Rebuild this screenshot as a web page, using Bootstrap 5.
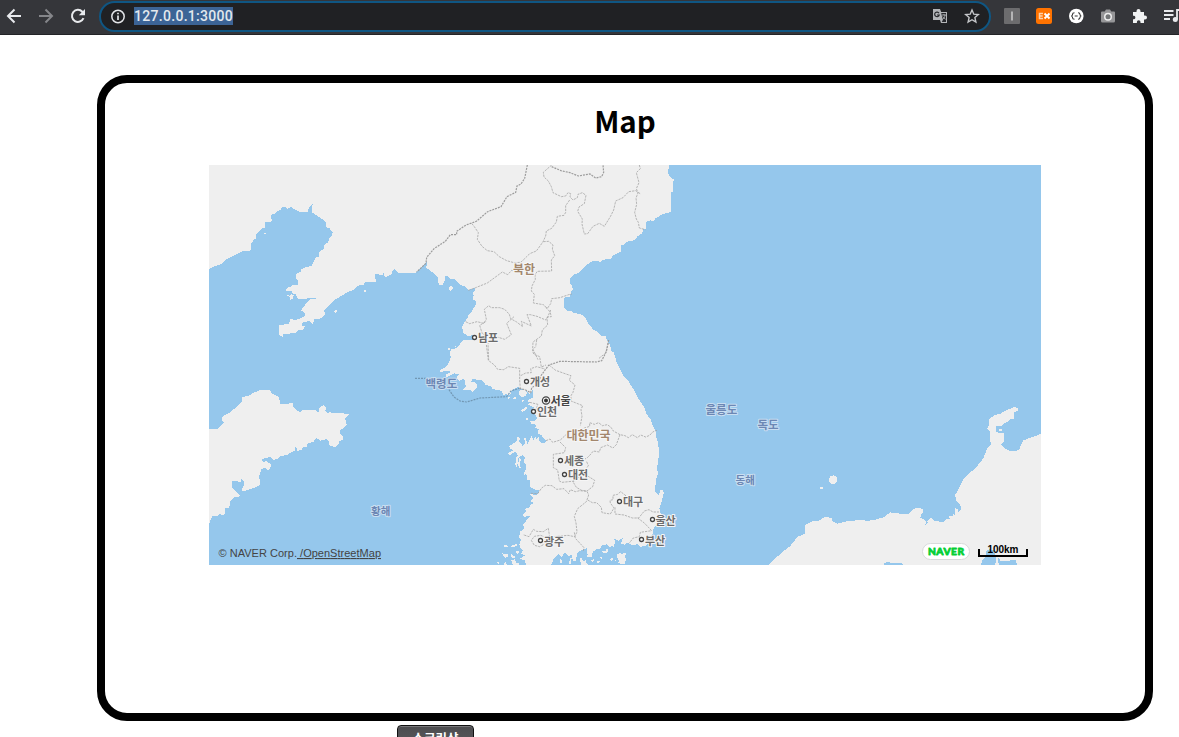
<!DOCTYPE html>
<html lang="ko">
<head>
<meta charset="utf-8">
<meta name="viewport" content="width=device-width, initial-scale=1">
<title>Map</title>
<link href="https://cdn.jsdelivr.net/npm/bootstrap@5.3.0/dist/css/bootstrap.min.css" rel="stylesheet">
<style>
body{font-family:"Liberation Sans","Noto Sans CJK KR",sans-serif;height:737px;overflow:hidden;color:#000}
.toolbar{height:35px;background:#35363a;border-bottom:1px solid #232427;padding:0 0 2px 6px}
.toolbar svg{display:block;flex:none}
.omnibox{width:892px;height:31px;margin-left:13px;border:2px solid #0f5683;border-radius:16px;background:#202124;padding:0 9px}
.address{font:500 14px/18px Roboto,sans-serif;color:#e3e8ed;background:#3c6496;letter-spacing:.3px;margin-left:9px}
.frame{width:1056px;height:646px;margin:40px 0 0 97px;border:8px solid #000;border-radius:30px}
.frame h1{font:700 29.5px/46px "Noto Sans CJK KR",sans-serif;margin:14px 0 22px}
.mapview{width:80%;height:400px;display:block;margin:0 auto}
.mapview text{font-family:"Noto Sans CJK KR",sans-serif;font-size:11px;font-weight:700;fill:#6c6c6c;paint-order:stroke;stroke:#f6f6f6;stroke-width:2px;stroke-linejoin:round}
.mapview .country{font-size:12px;fill:#a3876d}
.mapview .sea{fill:#6c87b4;stroke:#c9def1}
.mapview .latin{font-family:"Liberation Sans",sans-serif;fill:#444;stroke:none;font-weight:400}
.land{fill:#efefef;shape-rendering:crispEdges}
.water{fill:#95c7ec;shape-rendering:crispEdges}
.edge{fill:none;stroke:#a2a2a2;stroke-width:2.3;stroke-dasharray:7 3}
.edge.national{stroke:#9c9c9c;stroke-width:3.6;stroke-dasharray:6 3}
.shot{width:77px;height:28px;margin:4px 0 0 397px;background:linear-gradient(#4c4c4f,#5d5d60);border:1px solid #111;border-radius:4px;color:#fff;font:700 12.5px/21px "Noto Sans CJK KR",sans-serif;padding:0 0 4px;display:block;box-shadow:inset 0 1px #77777a}
</style>
</head>
<body class="bg-white">
<nav class="toolbar d-flex align-items-center">
  <svg width="16" height="16" fill="none" stroke="#e8eaed" stroke-width="2"><path d="M15 8H2M8.500 1.500L2 8l6.500 6.500"/></svg>
  <svg class="ms-3" width="16" height="16" fill="none" stroke="#85868a" stroke-width="2"><path d="M1 8h13M7.500 1.500L14 8l-6.500 6.500"/></svg>
  <svg class="ms-3" width="16" height="16" fill="none" stroke="#e8eaed" stroke-width="2"><path d="M13.500 10.200A6 6 0 1 1 12.300 3.700L14 5.500"/><path d="M15 1v6.200H8.800z" fill="#e8eaed" stroke="none"/></svg>
  <div class="omnibox d-flex align-items-center">
    <svg width="15" height="15" fill="none" stroke="#e3e5e8" stroke-width="1.500"><circle cx="8" cy="7.500" r="6.200"/><path d="M8 6.600v4.400M8 3.700v1.600" stroke-width="1.700"/></svg>
    <span class="address">127.0.0.1:3000</span>
    <svg class="ms-auto" width="16" height="16"><path d="M1 1h7l1.200 3H15v11H9l-1-3H1z" fill="#b2b4b7"/><path d="M9.200 5H14v9H9.800l1-2z" fill="#27282c"/><path d="M7 5.200A2.300 2.300 0 1 0 7.200 7H5" fill="none" stroke="#27282c" stroke-width="1.200"/><path d="M10 7h4M12 6v1M13 7c0 2-1.500 4-3 4.500M10.700 8.500l3 3" fill="none" stroke="#b2b4b7" stroke-width=".9"/></svg>
    <svg class="ms-3 me-0" width="16" height="16" fill="none" stroke="#c5c7ca" stroke-width="1.400"><path d="M8 2l1.800 4.200 4.500.4-3.400 3 1 4.400L8 11.700 4.100 14l1-4.400-3.400-3 4.500-.4z"/></svg>
  </div>
  <svg width="175" height="24" style="margin-left:13px">
    <rect x="0" y="4" width="16" height="16" rx="1" fill="#6c6c6e"/><path d="M8 7.500v9" stroke="#ddd" stroke-width="1.300"/>
    <rect x="32" y="4" width="16" height="16" rx="2.500" fill="#ff7300"/><path d="M39 9.500h-3.500v5H39M35.500 12h3.200" fill="none" stroke="#ffd2aa" stroke-width="1.500"/><path d="M40.500 9.500l5 5m0-5l-5 5" stroke="#fff" stroke-width="1.900"/>
    <circle cx="72.300" cy="12" r="7.300" fill="#fff"/><path d="M70.500 8.700q-2 0-2 1.800 0 1.200-1.200 1.500 1.200.3 1.200 1.500 0 1.800 2 1.800M74 8.700q2 0 2 1.800 0 1.200 1.200 1.500-1.200.3-1.200 1.500 0 1.800-2 1.800M70.700 12h3" fill="none" stroke="#333" stroke-width="1.100"/>
    <path d="M98 7.500h2.700l1.300-2h4l1.300 2h2.700q1 0 1 1V17q0 1.500-1.500 1.500h-11q-1.500 0-1.500-1.500V8.500q0-1 1-1z" fill="#969698"/><circle cx="104" cy="12.800" r="4" fill="#eee"/><circle cx="104" cy="12.800" r="2.500" fill="#747678"/>
    <path d="M129 8h3.500V7a2 2 0 0 1 4 0v1h3.500v3.500h1a2 2 0 0 1 0 4h-1V19h-3.500v-1a1.800 1.800 0 0 0-3.600 0v1H129v-3.800h1a1.800 1.800 0 0 0 0-3.500h-1z" fill="#f1f3f4"/>
    <path d="M160 7h9.500M160 11h9.500M160 15h6" stroke="#e8eaed" stroke-width="1.800"/><path d="M173 15.500V6h4" fill="none" stroke="#e8eaed" stroke-width="1.800"/><circle cx="171.300" cy="15.500" r="2.500" fill="#e8eaed"/>
  </svg>
</nav>

<main class="frame text-center">
  <h1>Map</h1>
  <svg class="mapview" viewBox="209 165 832 400">
    <rect class="water" x="209" y="165" width="832" height="400"/>
    <!-- Manchuria and Liaodong -->
    <g class="land" transform="translate(205 160) scale(.333333)">
      <path d="M12 15V327L24 321 42 315 55 308 65 297 82 289 100 280 115 273 133 273 138 268 137 248 145 247 146 237 153 236 153 222 165 213 173 205 180 203 180 187 196 186 204 180 198 177 200 163 213 160 217 153 226 150 230 142H242L248 147 258 141 266 147 283 155H309L311 145 319 137 321 132H324L321 137V157L331 164 345 173 356 181 362 188 363 202 375 205 377 211 383 218 380 229 372 237 369 247 358 254V266L346 273 341 281 341 290 333 293 326 304 320 318 300 322 289 328 288 335 275 340 272 353 280 364V374L265 374 258 380 246 383 241 393 261 394 264 401 273 404 279 418H300L309 414 333 413V417L315 418 302 430 300 437 292 444 289 452 299 458 299 468 288 474 274 480 256 477 252 491 223 496 222 523 232 531 236 522 273 519 279 511 297 508 299 498 291 499 290 492 296 487 311 483 318 487 324 492 328 478 342 476 350 474 360 463 357 450 363 446 390 419 410 407 430 395 444 391 460 377 476 374 480 366 512 366 511 343 530 344 534 347V339H537V347L543 351 556 345 560 340 562 333 568 329V325L572 331 580 338 620 340 635 337 665 305 667 325 690 343 698 352V363L705 376H713L720 358V15Z"/>
      <path d="M243 404l12 3 3-5 8 3-3 12-8 2 1-9-9-1zM177 218h7v4h-7zM477 390h6v6h-6zM388 453l7-3v6l-6 3z"/>
    </g>
    <!-- northern part of the peninsula -->
    <g class="land" transform="translate(400 160) scale(.333333)">
      <path d="M0 15V338L30 340 50 335 80 300 82 309 78 322 92 333 105 343 112 345 115 352 113 362 119 363 118 376 128 376 131 366V347L144 349 151 358 164 357 173 368 188 378 194 377 205 391 223 384 226 390 218 398 222 408 218 412 221 420 228 423 227 434 213 458 206 464 204 473 193 486 186 500 190 518 202 528 218 526 230 534 219 543 206 541 180 548 179 560 168 575 156 582 152 590 150 610H651L642 578 633 572 631 557 623 545 617 529 607 529 590 514 580 509 563 488 557 474 545 464 520 458 513 453 500 452 492 443V416L498 411H511L512 396 518 390 517 376 510 372V354L521 344 537 338 550 324 565 311 577 303 602 305 608 299 633 297 637 288 664 274 662 255 671 254 682 245 705 240 712 229 727 220 729 208 737 207 740 184 754 180 755 185 763 183 766 175 789 162 812 156V98L818 95 818 69 822 58 812 53 807 44 803 41 806 23V15Z"/>
      <path d="M147 382l7-4 5 6-5 8h-5zM141 568l5-5 4 2-1 5zM165 558l5-3-3 6z"/>
    </g>
    <!-- southern part of the peninsula and its islands -->
    <g class="land" transform="translate(410 340) scale(.333333)">
      <path d="M160 0L155 8 136 26 123 26 120 39 122 51 129 55 117 64 115 72 105 82 88 92 93 96 111 92 124 96 106 105 110 112 132 100 146 103 140 113 149 123 158 116 166 124 163 133 170 139 160 149 181 151 188 156 203 141 198 128 184 126 187 118 208 119 219 123 226 134 243 139 247 147 276 153 279 164 290 163 300 167 305 150 325 141 334 147 349 153 360 162 368 149 370 173 360 177 352 182 360 188 354 194 371 202 365 213 374 221 381 234 375 242 361 244 364 252 380 254 375 263 386 267 383 282 395 285 399 294 409 302 407 307 395 310 389 305 386 292 378 300 377 289 370 300 365 286 357 303 353 312 346 292 342 295 347 310 337 317 328 304 330 293 321 292 319 306 308 311 297 320 301 326 311 331 294 339 300 346 307 338 319 337 323 347 316 357 319 365 328 350 337 346 345 354 341 366 347 373 349 387 342 399 352 407 351 419 359 420 361 440 371 448 386 450 388 458 378 465 357 461 371 475 362 484 371 488 362 495 356 504 345 506 348 515 336 525 343 530 363 528 351 538 345 549 339 553 344 565 331 574 327 591 333 600 328 615 333 626 339 630 333 642 345 646 328 657 345 660 348 675H424L430 658 446 643 455 652 464 638 474 648 486 645 488 662 499 662 500 640 514 630 530 625 533 645 528 652 546 650 548 636 560 628 570 627 575 617 590 613 601 623 606 616 610 623 616 606 612 595 625 603 640 592 632 612 646 614 650 608 668 615 682 613 692 620 706 618 713 612 718 592 730 579 729 568 743 549 741 538 752 521 748 505 755 484 761 461 760 451 752 450 746 464 736 455 737 421 743 404 742 379 747 343 745 312 737 287 737 273 728 255 722 239 708 219 703 203 682 170 675 154 662 135 652 118 639 106 620 66 614 58 612 44 602 31 597 10 589 0Z"/>
      <path d="M328 153l13-6 10 10-4 12-12 1-8-6zM292 170l8 3-5 5zM309 173l8-2 3 6-8 1zM331 211l20-11-1 8-14 8zM338 177l6 6-8 3zM347 235l5-2 2 5-4 3zM318 351l6 2v17l-5 11-3-6zM329 351l4 8-4 13 4 12-7 1-1-17zM342 399l5 4-5 2z"/>
      <path d="M283 614l9 1 1 6-10-1zM303 618l6-5 2 3 7-6 3 6-8 6-8-1zM276 638l8 5 8-3 3 8-8 5-7-6zM303 640l6 7 7 1-2 7-10-3zM317 633l10 1-2 7-7-1zM262 667l6-1 1 4-6 1zM282 669l7-3 1 9h-8zM304 660l10-2 5 10 8 2-1 5h-17zM450 658l6 2-1 9-7-2zM480 652l5 2-2 18h-6zM508 656l7-3 4 10 9-2 2 10 7 4h-23zM574 633h12l5-8 4 8-8 7-8-1zM620 645l9-7 6 4 7-4 6 3-4 7 4 10-3 13-9 2-11-4 2-7-5-10zM600 656l8-1 2 5-7 3zM615 658l4 3-5 7zM570 651l8-1-2 8zM560 662l10 1-6 10zM541 660l10-2-1 10z"/>
    </g>
    <!-- Shandong -->
    <path class="land" transform="translate(205 360) scale(.333333)" d="M12 207H39L49 196 57 186 52 182V170L77 156 110 127V112L132 107 145 98 167 90H193L201 100 222 112 226 132H247L262 127 264 138 275 151 287 157 293 150H333L340 159 344 142 357 135 363 142 361 153 369 159 376 154 379 158H417L418 163 435 162 421 173 422 187 425 194 414 207 405 210V219L413 229V239L401 245 401 253 392 261 378 258 371 252 372 244 364 237 347 242 333 233 327 244 306 252 305 260 293 262 291 270 276 273 274 262 270 261 271 271 258 277 246 285 227 288 218 297 204 300 197 292 182 293 171 298 174 306 184 303 198 313 196 323 188 332 181 324 168 327 165 343 160 348 165 360 164 376 148 383 119 393 110 391 117 375 115 360 109 357 106 368 97 363H81V383L96 397 105 405 101 412 88 412 75 426 73 444 60 443V460L54 465 44 463 35 468 22 468 16 480 12 496Z"/>
    <!-- Honshu, Noto and Oki -->
    <g transform="translate(690 380) scale(.333333)">
      <path class="land" d="M1053 162L1024 172 1000 181 992 198 988 209 978 213H960L946 206 933 193 941 186V158L928 160 917 153 920 137 934 138 943 128 954 127 959 118 971 117 971 98 984 92V84L974 81 950 90 931 101 914 106 898 117V133L891 146 900 154V180L903 192 891 207 880 235 860 260 844 275 819 299 813 313 795 346 799 361 811 374 813 388 803 400 804 387 795 385 794 399 795 404 788 402V409L775 407 780 416 769 417 763 425 751 426 742 422 734 425 723 411 711 424 716 428 706 434 709 424 701 418 691 413 693 404 700 397V387L686 384 672 386 654 402H637L600 397 583 411 553 420 530 423 518 420 475 423 442 431 427 423V413L403 412 387 422 366 424 344 436V461L322 471 299 500 281 513 234 555H1053Z"/>
      <path class="land" d="M421 289l9-3 9 4 3 8-3 9-5 5-11-1-6-8v-8zM390 323l9-3v6l-6 3zM927 147h9v6h-9z"/>
      <path class="water" d="M582 555l1-5 10-4 14 3 30 1 2 5zM873 555l3-13 12-11 1-18 8-5 14 1 4 14 4 16-4 16zM924 534l6 3 2 8 12-3 34-1 3 14h-53l-4-10z"/>
    </g>
    <!-- borders -->
    <g transform="translate(400 160) scale(.333333)">
      <path class="edge national" d="M382 15L374 55 363 72 351 78 347 97 321 110 303 140 263 155 229 184 198 195 170 214V224L151 224 136 244 102 266 80 292 78 310 50 336M455 20L483 32 510 38 535 48 570 42 587 54 605 50 611 37 609 15"/>
      <path class="edge" d="M455 15l-25 22 2 14 13 12 9 17 5 18 25 12 13-2 7-10 8 3-2 10 9 9 13-7 2-10 13-5 11 8-5 25-16 10-4 13 14 23-1 15 5 22 2 8 10-1 16-22 19-9 15 9 18-29 10-20 6-27 22-10 17-18 21-3 15 10M718 15l3 11-12 12 8 30-8 18 5 13-6 15 2 19-6 24 5 20 6 10 3 17 18 5M509 120l-12 17 0 20-5 9-20 3-3 17-14 19-16 8-2 15-8 17-9 13-11 15-20 8-17 17-10 9-20 1-22-6-22-12-16-15-20-3-16-13-14-21 3-20-12-18-9-11M430 245l16-1 13 11-2 12 7 20-10 13 1 33-43 1-7 10 1 14-10 20-2 15 9 10-3 26 30 5 12 11 10-14 3-15 25-3 26-9 10-2"/>
      <path class="edge" d="M205 391l22-8 35-14 45-33 16 8 12-13 8 2M197 485l12 6 22-6 20 5 8-12-6-30 13-11 8 6 25 0 15 5 14 15 4 13 18 10 18 14-4-16 30 14-13-34 10 0 20 5 26 11 5-9 12-1-4-15-15-15M452 450l-11 26 2 19-16 15-3 18-25 18-1 20 16 33M342 470l-22 20 14 34-20 14-25-8-42-8-8-26 20-12M250 530l14 20 2 50M625 549l-8 30-20 16"/>
    </g>
    <g transform="translate(410 340) scale(.333333)">
      <path class="edge national" d="M596 0L589 35 575 62 560 66 450 64 417 75 406 89 393 107 387 127 365 144 362 158 345 149 327 145"/>
      <path class="edge national" style="stroke:#7297b3" d="M15 115H49M117 149L132 171 150 183 170 186 210 174 290 170 303 153 327 145"/>
      <path class="edge" d="M228 5l7 56 18 14 10 13 18 1 14-9 34 5v36l2 25M380 0l-3 20-10 10 4 12 18 8 5 31 14-6M332 107l15-8 17-1-2-12 18-6 25 7M417 75l20 16 28 10 18 6-5 14 17 14-6 22-6 10v16l35 14-5 12 3 20-5 28M359 187l25 6-7 17M408 302l12-5 8 10 23-7 18-17M512 268l27-9 0-11 14 5 13-5 11 9 15-3 11 8 7 11 20 11 15 3 10 6 12-9 15 9 10-8 15 6 12-5 9-10 13-5M630 284l-11 30-10 10-17-9-20 8-4 13-18-3-10 12-8 8-7 4M450 306l17 17-4 15-33 5 0 40 13 7 5 33 8 4 40-4 10-12 17 7M530 365l5 12-11 16 9 15 21 13-6 19-17 13-16-2-16-9-9-15 2-20M363 460l20 1 12-17 11-8 20 1 14 11 22-2 14 15 5-12 15 6 13-3 22 2 5 11-7 20-26 21-10 23 5 20 3 27-7 14-20-4-55 5-4-26-15 10-20-1-10-6-13 22-18-6M533 480l14 8 13 0 14 14 2 16 25 4 11-18-11-15-1-8 9-2v-13l14-3 9-8 18 14M615 502v20l27 3 25 9 19 0 17-21 14-4 12 7 18 0M683 534l20 15 22 23-34 5-3 13-18 4-13 16M493 577l3 18 26 28-3 12M400 614l-11 6-16-4-9-15 9-12 19-3 10 4"/>
    </g>
    <!-- city labels and markers -->
    <text x="478" y="342">남포</text><text x="530" y="386">개성</text><text x="537" y="416">인천</text><text x="550.500" y="405" style="fill:#444">서울</text><text x="564" y="465">세종</text><text x="568" y="479">대전</text><text x="623" y="506">대구</text><text x="655.500" y="524.500">울산</text><text x="645" y="544.500">부산</text><text x="544" y="545.500">광주</text>
    <g fill="#fff" stroke="#444" stroke-width="1.300"><circle cx="474.500" cy="337.500" r="2"/><circle cx="526.500" cy="381.500" r="2"/><circle cx="533.500" cy="411.500" r="2"/><circle cx="560.500" cy="460.500" r="2"/><circle cx="564.500" cy="474.500" r="2"/><circle cx="619.500" cy="501.500" r="2"/><circle cx="652.500" cy="519.500" r="2"/><circle cx="641.500" cy="539.500" r="2"/><circle cx="540.500" cy="540.500" r="2"/><circle cx="546" cy="400.500" r="3.600"/></g><circle cx="546" cy="400.500" r="2" fill="#333"/>
    <text class="country" x="513" y="273.500">북한</text><text class="country" x="566.500" y="439.500">대한민국</text>
    <text class="sea" x="425.500" y="387.500" style="font-size:11.500px">백령도</text><text class="sea" x="705.500" y="413.500" style="font-size:11.500px">울릉도</text><text class="sea" x="757.500" y="428.500" style="font-size:11.500px">독도</text><text class="sea" x="735.500" y="484" style="font-size:10.500px">동해</text><text class="sea" x="371" y="515" style="font-size:10.500px">황해</text>
    <text class="latin" x="218.500" y="557" textLength="78.500">© NAVER Corp.</text><text class="latin" x="297" y="557" textLength="84" text-decoration="underline" xml:space="preserve"> /OpenStreetMap</text>
    <rect x="922.500" y="543.500" width="47" height="16" rx="8" fill="#fff" stroke="#d8dadb"/>
    <text x="928" y="555.300" textLength="36" style="font:900 10.200px Lato,sans-serif;fill:#03cf36;stroke:#03cf36;stroke-width:.8px">NAVER</text>
    <path d="M979 549v7h48v-7" fill="none" stroke="#000" stroke-width="2"/>
    <text x="987.500" y="553" textLength="31" style="font:700 10px 'Liberation Sans',sans-serif;fill:#000;stroke:none">100km</text>
  </svg>
</main>
<button class="shot" type="button">스크린샷</button>
<script src="https://cdn.jsdelivr.net/npm/bootstrap@5.3.0/dist/js/bootstrap.bundle.min.js"></script>
</body>
</html>
